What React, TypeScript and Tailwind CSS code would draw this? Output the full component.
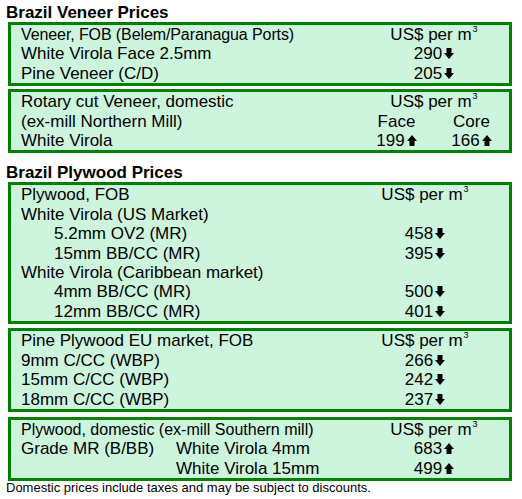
const ArrowDown = () => (
  <svg width="10" height="11" viewBox="0 0 10 11" className="inline-block align-baseline ml-[2px]">
    <path d="M2.5 0h5v5H10L5 11 0 5h2.5z" fill="#000" />
  </svg>
)

const ArrowUp = () => (
  <svg width="10" height="11" viewBox="0 0 10 11" className="inline-block align-baseline ml-[2px]">
    <path d="M5 0l5 6H7.5v5h-5V6H0z" fill="#000" />
  </svg>
)

const Unit = () => (
  <span className="text-[17px]">
    US$ per m<sup className="relative -top-[8px] text-[9px] leading-none align-baseline ml-[1px]">3</sup>
  </span>
)

type Row = { label: string; indent?: boolean; value?: string; dir?: 'up' | 'down'; head?: boolean; narrow?: boolean }

function Price({ value, dir }: { value: string; dir: 'up' | 'down' }) {
  return (
    <span>
      {value}
      {dir === 'down' ? <ArrowDown /> : <ArrowUp />}
    </span>
  )
}

function Box({ rows, right }: { rows: Row[]; right: string }) {
  return (
    <div className="border-[3px] border-[#008000] bg-[#cdf5dd] pl-[10px]">
      {rows.map((r, i) => (
        <div key={i} className="flex leading-[19.4px]">
          <div className={r.indent ? 'flex-1 pl-[33px]' : r.narrow ? 'flex-1 text-[16px] tracking-[-0.1px]' : 'flex-1'}>
            {r.label}
          </div>
          <div className={`w-[150px] text-center ${right}`}>
            {r.head ? <Unit /> : r.value ? <Price value={r.value} dir={r.dir!} /> : null}
          </div>
        </div>
      ))}
    </div>
  )
}

export default function App() {
  return (
    <div className="w-[522px] h-[499px] bg-white text-black font-['Liberation_Sans',Arial,sans-serif] text-[17px]">
      <h2 className="pl-[6px] pt-[3px] leading-[19px] font-bold">Brazil Veneer Prices</h2>
      <div className="ml-[8px] w-[504px]">
        <Box
          right="mr-0"
          rows={[
            { label: 'Veneer, FOB (Belem/Paranagua Ports)', head: true, narrow: true },
            { label: 'White Virola Face 2.5mm', value: '290', dir: 'down' },
            { label: 'Pine Veneer (C/D)', value: '205', dir: 'down' },
          ]}
        />
        <div className="mt-[3px] border-[3px] border-[#008000] bg-[#cdf5dd] pl-[10px] leading-[19.4px]">
          <div className="flex">
            <div className="flex-1">Rotary cut Veneer, domestic</div>
            <div className="w-[150px] text-center"><Unit /></div>
          </div>
          <div className="flex">
            <div className="flex-1">(ex-mill Northern Mill)</div>
            <div className="w-[75px] text-center">Face</div>
            <div className="w-[75px] text-center">Core</div>
          </div>
          <div className="flex">
            <div className="flex-1">White Virola</div>
            <div className="w-[75px] text-center"><Price value="199" dir="up" /></div>
            <div className="w-[75px] text-center"><Price value="166" dir="up" /></div>
          </div>
        </div>
      </div>

      <h2 className="pl-[6px] pt-[10px] leading-[19px] font-bold">Brazil Plywood Prices</h2>
      <div className="ml-[8px] w-[504px] flex flex-col">
        <Box
          right="mr-[9px]"
          rows={[
            { label: 'Plywood, FOB', head: true },
            { label: 'White Virola (US Market)' },
            { label: '5.2mm OV2 (MR)', indent: true, value: '458', dir: 'down' },
            { label: '15mm BB/CC (MR)', indent: true, value: '395', dir: 'down' },
            { label: 'White Virola (Caribbean market)' },
            { label: '4mm BB/CC (MR)', indent: true, value: '500', dir: 'down' },
            { label: '12mm BB/CC (MR)', indent: true, value: '401', dir: 'down' },
          ]}
        />
        <div className="mt-[4px]">
          <Box
            right="mr-[9px]"
            rows={[
              { label: 'Pine Plywood EU market, FOB', head: true },
              { label: '9mm C/CC (WBP)', value: '266', dir: 'down' },
              { label: '15mm C/CC (WBP)', value: '242', dir: 'down' },
              { label: '18mm C/CC (WBP)', value: '237', dir: 'down' },
            ]}
          />
        </div>
        <div className="mt-[5px] border-[3px] border-[#008000] bg-[#cdf5dd] pl-[10px] leading-[19.4px]">
          <div className="flex">
            <div className="flex-1 text-[16px]">Plywood, domestic (ex-mill Southern mill)</div>
            <div className="w-[150px] text-center"><Unit /></div>
          </div>
          <div className="flex">
            <div className="w-[155px]">Grade MR (B/BB)</div>
            <div className="flex-1">White Virola 4mm</div>
            <div className="w-[150px] text-center"><Price value="683" dir="up" /></div>
          </div>
          <div className="flex">
            <div className="w-[155px]" />
            <div className="flex-1">White Virola 15mm</div>
            <div className="w-[150px] text-center"><Price value="499" dir="up" /></div>
          </div>
        </div>
      </div>
      <p className="pl-[6px] text-[13px] leading-[14px]">
        Domestic prices include taxes and may be subject to discounts.
      </p>
    </div>
  )
}
